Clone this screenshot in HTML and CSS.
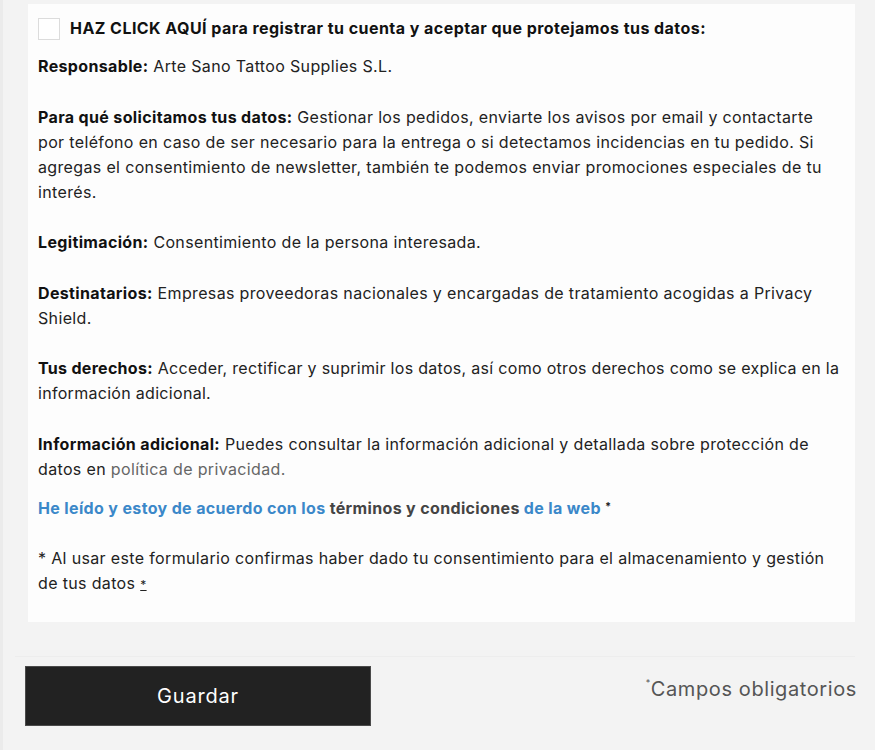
FILE: index.html
```html
<!DOCTYPE html>
<html lang="es">
<head>
  <meta charset="UTF-8">
  <meta name="viewport" content="width=device-width, initial-scale=1.0">
  <title>Registro - Arte Sano</title>
  <link rel="stylesheet" href="styles.css">
</head>
<body>
  <div class="page">
    <section class="privacy-box">
      <label class="consent-head">
        <span class="check"></span>
        <strong>HAZ CLICK AQUÍ para registrar tu cuenta y aceptar que protejamos tus datos:</strong>
      </label>

      <p class="info"><b>Responsable:</b> Arte Sano Tattoo Supplies S.L.</p>
      <p class="info"><b>Para qué solicitamos tus datos:</b> Gestionar los pedidos, enviarte los avisos por email y contactarte por teléfono en caso de ser necesario para la entrega o si detectamos incidencias en tu pedido. Si agregas el consentimiento de newsletter, también te podemos enviar promociones especiales de tu interés.</p>
      <p class="info"><b>Legitimación:</b> Consentimiento de la persona interesada.</p>
      <p class="info"><b>Destinatarios:</b> Empresas proveedoras nacionales y encargadas de tratamiento acogidas a Privacy Shield.</p>
      <p class="info rights"><b>Tus derechos:</b> Acceder, rectificar y suprimir los datos, así como otros derechos como se explica en la información adicional.</p>
      <p class="info last"><b>Información adicional:</b> Puedes consultar la información adicional y detallada sobre protección de datos en <a class="muted-link" href="#">política de privacidad.</a></p>

      <p class="terms">He leído y estoy de acuerdo con los <span class="terms-dark">términos y condiciones</span> de la web <span class="star">*</span></p>

      <p class="info note">* Al usar este formulario confirmas haber dado tu consentimiento para el almacenamiento y gestión de tus datos <u>*</u></p>
    </section>

    <div class="actions">
      <button class="btn-save" type="button">Guardar</button>
      <span class="required"><sup>*</sup>Campos obligatorios</span>
    </div>
  </div>
</body>
</html>
```

FILE: styles.css
```css
body {
  margin: 0;
  padding: 0;
  background: #ebebeb;
  font-family: "Inter", "Lato", sans-serif;
  color: #222;
}

.page {
  margin-left: 3px;
  background: #f3f3f3;
  min-height: 750px;
  padding: 4px 20px 0 12px;
}

/* white box */
.privacy-box {
  background: #fdfdfd;
  margin-left: 13px;
  padding: 12px 12px 25px 10px;
  font-size: 16px;
  line-height: 25px;
  letter-spacing: 0.35px;
}

.consent-head {
  display: flex;
  align-items: center;
  gap: 10px;
  margin-bottom: 13px;
}

.check {
  width: 20px;
  height: 20px;
  border: 1px solid #dcdcdc;
  background: #fff;
  flex: none;
}

.consent-head strong {
  font-weight: 700;
  color: #111;
  letter-spacing: 0.45px;
}

.info {
  margin: 0 0 25.5px;
}

.info b {
  font-weight: 700;
  color: #111;
}

.info.rights {
  letter-spacing: 0.3px;
}

.info.last {
  margin-bottom: 14px;
}

.muted-link {
  color: #666;
  text-decoration: none;
}

.terms {
  margin: 0 0 25px;
  color: #3b88c9;
  font-weight: 700;
}

.terms-dark {
  color: #444;
}

.star {
  color: #222;
  font-size: 11px;
  vertical-align: top;
  line-height: 20px;
}

.note {
  margin-bottom: 0;
}

.note u {
  font-size: 12px;
  text-decoration-thickness: 1px;
}

/* bottom bar */
.actions {
  margin-top: 34px;
  border-top: 1px solid #ededed;
  padding: 9px 0 0 10px;
  display: flex;
  justify-content: space-between;
  align-items: flex-start;
}

.btn-save {
  width: 346px;
  height: 60px;
  background: #222;
  border: 1px solid #4a4a4a;
  color: #fff;
  font-family: "Inter", sans-serif;
  font-size: 20px;
  letter-spacing: 0.8px;
  padding-left: 6px;
  cursor: pointer;
}

.required {
  font-size: 20px;
  color: #555;
  margin-top: 11px;
  margin-right: -2px;
  letter-spacing: 0.6px;
}

.required sup {
  font-size: 9px;
  vertical-align: 10px;
}
```
